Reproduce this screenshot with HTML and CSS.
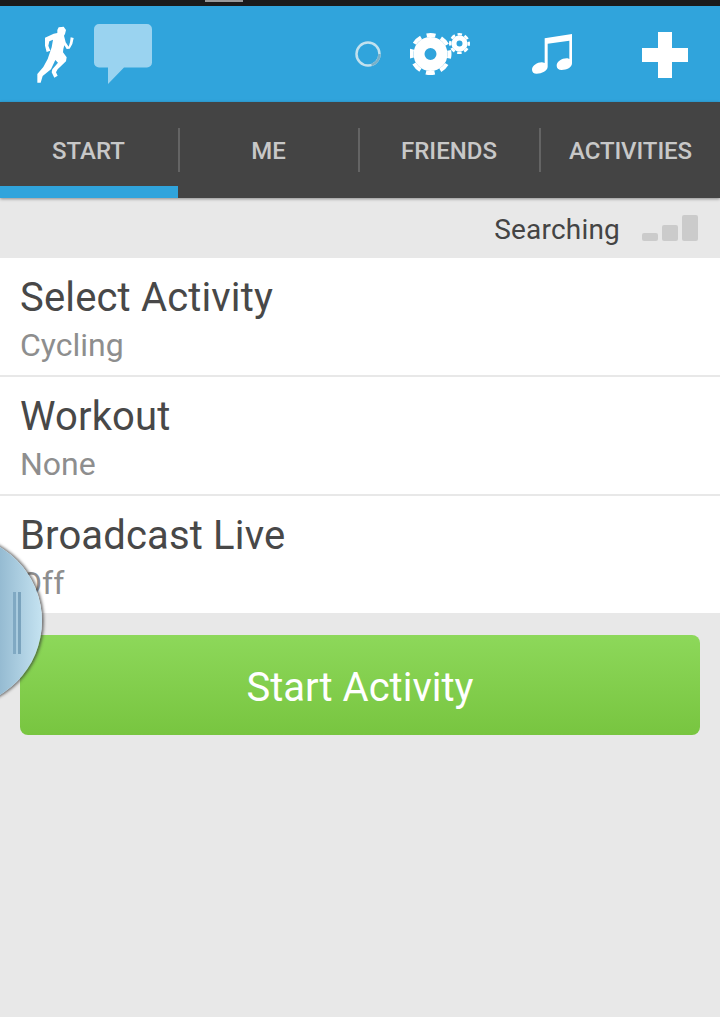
FILE: index.html
```html
<!DOCTYPE html>
<html lang="en">
<head>
<meta charset="utf-8">
<title>Start Activity</title>
<link rel="stylesheet" href="styles.css">
</head>
<body>
<div class="status"><span class="status-mark"></span></div>
<header class="appbar">
  <div class="appbar-left">
    <svg class="runner" viewBox="110 76 111 171" width="37" height="57"><path d="M175 80 190 78 197 88 194 100 191 105 196 125 205 138 209 125 211 110 220 112 216 130 208 144 199 145 192 134 189 145 188 155 199 170 197 182 172 206 167 215 172 225 162 231 154 215 156 206 173 186 165 178 152 206 127 226 121 246 111 246 111 220 129 199 142 175 154 140 158 117 147 122 144 135 150 150 139 154 134 135 134 111 160 99 171 97 171 88Z"/></svg>
    <svg class="bubble" viewBox="0 0 58 60" width="58" height="60"><path d="M5 0h48a5 5 0 0 1 5 5v33.500a5 5 0 0 1-5 5H30L14 60V43.500H5a5 5 0 0 1-5-5V5a5 5 0 0 1 5-5z"/></svg>
  </div>
  <div class="appbar-right">
    <svg class="spinner" viewBox="0 0 26 26" width="26" height="26"><circle cx="13" cy="13" r="11.500" class="spin-base"/><path d="M24.500 13a11.500 11.500 0 0 1-8 11" class="spin-arc"/></svg>
    <svg class="gears" viewBox="410 33 61 42" width="61" height="42">
      <circle cx="430.500" cy="54" r="11.500" class="gear-big-body"/>
      <circle cx="430.500" cy="54" r="19" class="gear-big-teeth"/>
      <circle cx="459.500" cy="43.500" r="5.500" class="gear-small-body"/>
      <circle cx="459.500" cy="43.500" r="9.250" class="gear-small-teeth"/>
    </svg>
    <svg class="music" viewBox="576 102 120 120" width="40" height="40"><path d="M696 102V190C696 203 680 210 665 210 655 210 650 204 650 197 650 185 665 175 680 175 684 175 686 176 688 177V122L623 131V200C623 212 605 221 590 221 581 221 576 216 576 209 576 197 592 187 605 187 608 187 611 188 614 189V115Z"/></svg>
    <span class="plus"></span>
  </div>
</header>
<nav class="tabs">
  <div class="tab tab-active"><span>START</span></div>
  <div class="tab"><span>ME</span></div>
  <div class="tab"><span>FRIENDS</span></div>
  <div class="tab"><span>ACTIVITIES</span></div>
</nav>
<div class="gps">
  <span class="gps-label">Searching</span>
  <div class="bars"><i class="bar bar1"></i><i class="bar bar2"></i><i class="bar bar3"></i></div>
</div>
<section class="list">
  <div class="row"><div class="row-title">Select Activity</div><div class="row-sub">Cycling</div></div>
  <div class="row"><div class="row-title">Workout</div><div class="row-sub">None</div></div>
  <div class="row row-last"><div class="row-title">Broadcast Live</div><div class="row-sub">Off</div></div>
</section>
<div class="actions"><div class="start-btn">Start Activity</div></div>
<div class="handle"><i class="grip-a"></i><i class="grip-b"></i></div>
</body>
</html>
```

FILE: styles.css
```css
* { box-sizing: border-box; }
html, body { margin: 0; padding: 0; }
body {
  width: 720px;
  height: 1017px;
  overflow: hidden;
  background: #e8e8e8;
  font-family: Roboto, "Noto Sans", sans-serif;
  position: relative;
}
.status { height: 6px; background: #1b1b1b; padding-left: 205px; }
.status-mark { display: block; width: 38px; height: 2px; background: #999; }
.appbar {
  height: 96px;
  background: #30a4dc;
  display: flex;
  align-items: center;
  justify-content: space-between;
}
.appbar-left { display: flex; align-items: center; padding-left: 37px; }
.runner { fill: #fff; display: block; }
.bubble { fill: #9ad3f0; margin-left: 20px; display: block; }
.appbar-right { display: flex; align-items: center; padding-right: 32px; }
.spinner { margin-right: 29px; fill: none; stroke-width: 2.500; display: block; }
.spin-base { stroke: #c2e1ee; }
.spin-arc { stroke: #7ab0c8; }
.gears { margin-right: 61px; display: block; fill: none; stroke: #fff; }
.gear-big-body { stroke-width: 11px; }
.gear-big-teeth { stroke-width: 4px; stroke-dasharray: 9 5.920; stroke-dashoffset: 4.500; }
.gear-small-body { stroke-width: 5px; }
.gear-small-teeth { stroke-width: 2.500px; stroke-dasharray: 4.500 2.765; stroke-dashoffset: 2.250; }
.music { fill: #fff; margin-right: 70px; display: block; }
.plus {
  display: block;
  width: 46px;
  height: 46px;
  margin-top: 2px;
  background:
    linear-gradient(#fff, #fff) center / 14px 46px no-repeat,
    linear-gradient(#fff, #fff) center / 46px 14px no-repeat;
}
.tabs {
  height: 96px;
  background: #444444;
  display: grid;
  grid-template-columns: 180px 180px 181px 179px;
  box-shadow: 0 1px 3px rgba(0, 0, 0, 0.4);
  position: relative;
}
.tab {
  display: flex;
  align-items: flex-start;
  justify-content: center;
  padding: 27px 3px 0 0;
  height: 96px;
  position: relative;
  color: #c8c8c8;
  font-size: 24px;
  font-weight: 500;
  line-height: 44px;
}
.tab:last-child { padding-right: 0; letter-spacing: -0.1px; }
.tab:not(:last-child)::after {
  content: "";
  position: absolute;
  right: 0;
  top: 26px;
  width: 2px;
  height: 44px;
  background: #646464;
}
.tab-active::before {
  content: "";
  position: absolute;
  left: 0;
  right: 2px;
  bottom: 0;
  height: 12px;
  background: #30a4dc;
}
.gps {
  height: 60px;
  display: flex;
  align-items: center;
  justify-content: flex-end;
  padding-right: 22px;
}
.gps-label { font-size: 28px; color: #444; margin-right: 22px; letter-spacing: 0.2px; position: relative; top: 1px; }
.bars { display: flex; align-items: flex-end; gap: 4px; height: 26px; }
.bar { display: block; width: 16px; background: #cbcbcb; border-radius: 2px; }
.bar1 { height: 8px; }
.bar2 { height: 16px; }
.bar3 { height: 26px; }
.list { background: #fff; }
.row {
  height: 119px;
  padding: 15px 20px 0;
  border-bottom: 2px solid #e8e8e8;
}
.row-last { height: 117px; border-bottom: 0; }
.row-title { font-size: 40px; line-height: 50px; color: #484848; letter-spacing: 0.15px; }
.row-sub { font-size: 32px; line-height: 44px; color: #8e8e8e; }
.actions { padding: 22px 20px 0; }
.start-btn {
  height: 100px;
  border-radius: 8px;
  background: linear-gradient(#8dd85a, #78c540);
  color: #fff;
  font-size: 40px;
  line-height: 106px;
  text-align: center;
}
.handle {
  position: absolute;
  left: -130px;
  top: 535px;
  width: 172px;
  height: 172px;
  border-radius: 50%;
  background: linear-gradient(90deg, #94bad1 75%, #c5e3f1);
  box-shadow: 1px 0 3px 1px rgba(50, 50, 50, 0.65);
  display: flex;
  gap: 2px;
  justify-content: flex-end;
  padding: 57px 21px 0 0;
}
.handle i { display: block; width: 3px; height: 62px; }
.grip-a { background: #80a9c3; }
.grip-b { background: #7aa3bd; }
```
